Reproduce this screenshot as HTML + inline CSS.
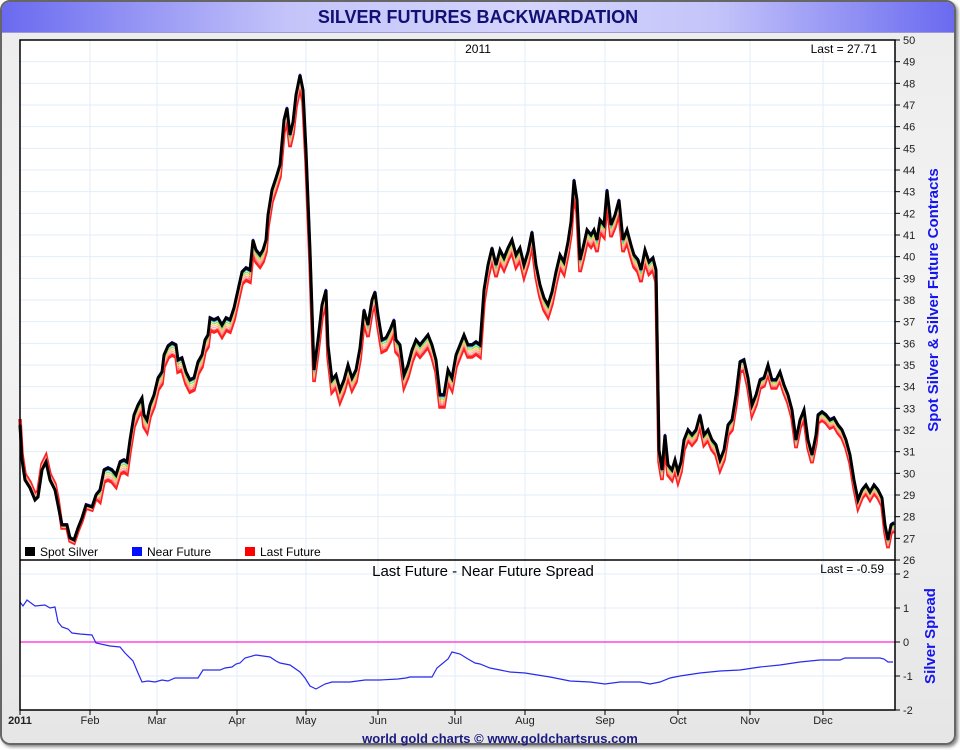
<!DOCTYPE html>
<html><head><style>
body{margin:0;width:960px;height:750px;overflow:hidden;background:#fff;font-family:"Liberation Sans",sans-serif}
#frame{position:absolute;left:0;top:0;width:956px;height:745px;border:2px solid #666;border-radius:10px;background:linear-gradient(#ececec,#f4f4f4 40%,#e6e6e6);box-sizing:border-box;box-shadow:2px 2px 3px #888;overflow:hidden}
#title{position:absolute;left:0;top:0;width:100%;height:30px;background:linear-gradient(90deg,#6a6af0,#c4c4fa 30%,#d4d4fc 55%,#c4c4fa 75%,#6a6af0);border-bottom:1px solid #9a9ad8;text-align:center;font-weight:bold;font-size:18px;color:#111175;line-height:30px}
</style></head><body>
<div id="frame"><div id="title">SILVER FUTURES BACKWARDATION</div></div>
<svg id="s" width="960" height="750" style="position:absolute;left:0;top:0" font-family="Liberation Sans, sans-serif"></svg>
<script>
var s=document.getElementById('s'),h='';
h+='<rect x="20" y="40" width="875" height="670" fill="#fff"/>';
var mx=[20,90,157,237,306,378,455,525,605,678,750,823],mn=['2011','Feb','Mar','Apr','May','Jun','Jul','Aug','Sep','Oct','Nov','Dec'];
for(var i=0;i<mx.length;i++){h+='<line x1="'+mx[i]+'" y1="40" x2="'+mx[i]+'" y2="710" stroke="#e2eef8"/>';h+='<line x1="'+mx[i]+'" y1="710" x2="'+mx[i]+'" y2="715" stroke="#000"/>';h+='<text x="'+mx[i]+'" y="724" font-size="11" text-anchor="middle" '+(i==0?'font-weight="bold"':'')+' fill="#222">'+mn[i]+'</text>';}
for(var v=26;v<=50;v++){var y=40+(50-v)*520/24;h+='<line x1="20" y1="'+y+'" x2="895" y2="'+y+'" stroke="#e2eef8"/><line x1="895" y1="'+y+'" x2="900" y2="'+y+'" stroke="#000"/><text x="903" y="'+(y+4)+'" font-size="11" fill="#222">'+v+'</text>';}
for(var v=-2;v<=2;v++){var y=642-v*34;h+='<line x1="20" y1="'+y+'" x2="895" y2="'+y+'" stroke="#e2eef8"/><line x1="895" y1="'+y+'" x2="900" y2="'+y+'" stroke="#000"/><text x="903" y="'+(y+4)+'" font-size="11" fill="#222">'+v+'</text>';}
var p=[20,425,22,460,25,480,30,488,35,500,38,497,42,470,46,462,50,480,55,490,58,505,62,525,67,525,70,538,74,540,78,528,82,518,86,505,92,507,96,495,100,490,104,470,108,468,112,470,116,475,120,462,124,460,127,462,130,440,134,415,138,405,142,398,144,415,147,420,150,405,154,395,158,378,162,372,164,355,168,346,172,343,176,345,178,360,182,358,186,372,190,380,194,378,198,362,202,355,205,340,208,335,210,318,214,320,218,318,222,325,226,318,230,320,234,308,238,290,242,272,246,268,250,270,253,240,256,250,260,255,263,250,266,240,268,215,272,190,276,178,280,165,284,120,287,108,290,135,293,122,296,95,300,75,303,90,306,150,310,250,314,370,318,340,322,305,326,290,328,345,332,380,336,375,340,390,344,380,348,365,352,378,356,370,360,348,364,310,368,325,372,300,375,292,378,315,382,340,386,338,390,330,394,320,396,340,400,345,404,375,408,365,412,350,416,340,420,345,424,340,428,335,432,345,436,360,440,395,444,395,448,370,452,378,456,355,460,345,464,335,468,345,472,345,476,342,480,345,484,290,488,265,492,248,496,265,500,250,504,258,508,248,512,240,516,255,520,248,524,265,528,252,532,232,536,265,540,285,544,298,548,305,552,292,556,272,560,255,564,262,568,242,571,222,574,180,577,200,580,260,583,248,587,230,591,235,594,230,597,240,600,220,604,225,607,190,611,225,615,215,619,200,623,240,627,230,631,245,634,255,638,260,641,270,645,250,649,262,653,258,656,270,659,450,662,470,665,435,668,465,672,470,675,460,678,472,681,462,684,440,688,430,692,435,696,430,700,415,704,435,708,430,712,440,716,445,720,460,724,450,728,425,732,420,736,395,740,362,744,360,748,378,752,405,756,395,760,380,764,378,768,365,772,380,776,380,780,372,784,385,788,395,792,410,796,440,800,420,804,410,808,440,812,455,816,435,818,415,822,412,826,415,830,420,834,418,838,425,842,430,846,440,850,455,854,480,858,500,862,490,866,485,870,492,874,485,878,490,882,498,885,525,888,540,891,525,894,523];
function path(a,off){var d='';for(var i=0;i<a.length;i+=2){var o=typeof off=='function'?off(a[i]):off;d+=(i?'L':'M')+a[i]+','+(a[i+1]+o);}return d;}
function bo(x){if(x<60)return -6;if(x<100)return 3;if(x<660)return 12;if(x<760)return 10;return 8;}
var cols=['#ff2020','#ff8888','#ffaaaa','#ffcc66','#88dd55','#33bbee'];
for(var k=0;k<cols.length;k++){(function(f){h+='<path d="'+path(p,function(x){return bo(x)*f;})+'" fill="none" stroke="'+cols[k]+'" stroke-width="'+(k==0?3.5:1.2)+'"/>';})(1-k/6);}
h+='<path d="'+path(p,-1)+'" fill="none" stroke="#1020ff" stroke-width="2"/>';
h+='<path d="'+path(p,0)+'" fill="none" stroke="#000" stroke-width="3"/>';
var q=[20,602,23,606,27,600,35,606,45,605,50,608,55,607,58,622,62,627,68,629,72,633,80,634,92,635,96,643,110,646,120,647,125,653,133,661,138,673,142,682,148,681,155,682,162,680,168,681,175,678,198,678,203,670,220,670,225,668,232,667,236,664,240,663,245,658,256,655,270,657,276,661,280,663,290,665,300,672,305,678,310,686,316,689,325,684,332,682,350,682,365,680,380,680,398,679,406,678,410,677,432,677,437,668,448,659,452,652,460,654,468,659,475,663,480,664,490,668,500,670,510,672,525,673,550,677,570,681,590,682,605,684,620,682,640,682,650,684,660,682,670,678,680,676,700,673,720,671,740,670,760,667,780,665,800,662,820,660,840,660,845,658,860,658,880,658,884,659,888,662,893,662];
h+='<line x1="20" y1="642" x2="895" y2="642" stroke="#ff22dd" stroke-width="1.2"/>';
h+='<path d="'+path(q,0)+'" fill="none" stroke="#2a2aee" stroke-width="1.2"/>';
h+='<rect x="20" y="40" width="875" height="670" fill="none" stroke="#000" stroke-width="1.5"/><line x1="20" y1="560" x2="895" y2="560" stroke="#000" stroke-width="1.5"/>';
h+='<text x="478" y="53" font-size="12" text-anchor="middle">2011</text><text x="877" y="53" font-size="12" text-anchor="end">Last = 27.71</text>';
h+='<text x="483" y="576" font-size="15" text-anchor="middle">Last Future - Near Future Spread</text><text x="884" y="573" font-size="12" text-anchor="end">Last = -0.59</text>';
h+='<rect x="25" y="547" width="10" height="9" fill="#000"/><text x="40" y="556" font-size="12">Spot Silver</text><rect x="132" y="547" width="10" height="9" fill="#0010ff"/><text x="147" y="556" font-size="12">Near Future</text><rect x="245" y="547" width="10" height="9" fill="#ff0000"/><text x="260" y="556" font-size="12">Last Future</text>';
h+='<text transform="translate(938,300) rotate(-90)" font-size="15" font-weight="bold" fill="#1515ee" text-anchor="middle">Spot Silver &amp; Silver Future Contracts</text>';
h+='<text transform="translate(935,636) rotate(-90)" font-size="15" font-weight="bold" fill="#1515ee" text-anchor="middle">Silver Spread</text>';
h+='<text x="500" y="743" font-size="13" font-weight="bold" fill="#1a1a80" text-anchor="middle">world gold charts © www.goldchartsrus.com</text>';
s.innerHTML=h;
</script>
</body></html>
